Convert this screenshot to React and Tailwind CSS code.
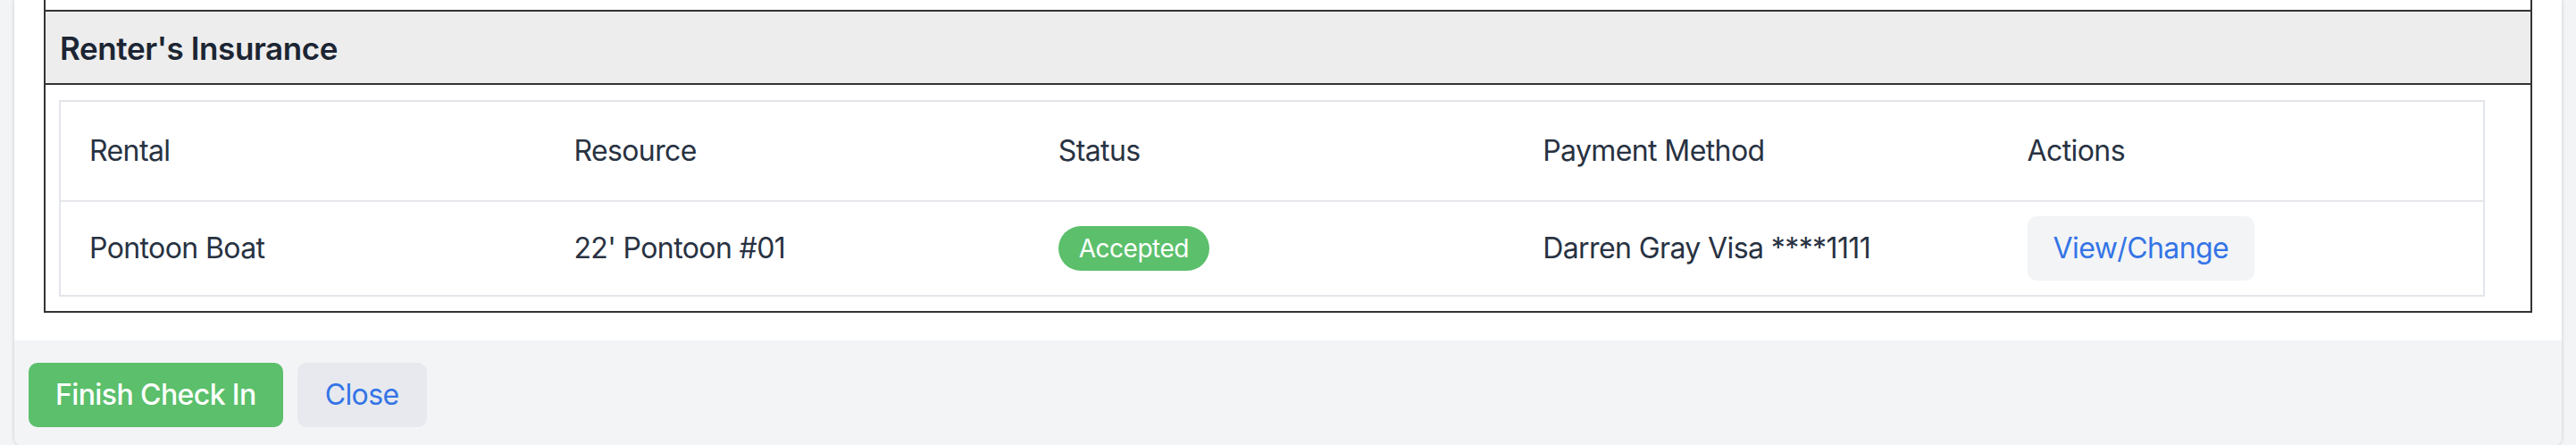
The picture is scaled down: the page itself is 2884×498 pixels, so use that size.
import React from 'react';

const columns = ['Rental', 'Resource', 'Status', 'Payment Method', 'Actions'];

const rows = [
  {
    rental: 'Pontoon Boat',
    resource: "22' Pontoon #01",
    status: 'Accepted',
    payment: 'Darren Gray Visa ****1111'
  }
];

function StatusBadge({ label }) {
  return (
    <span className="inline-flex items-center rounded-full bg-[#5cbf6b] px-[23px] py-[5px] text-[28px] leading-[40px] tracking-[-0.5px] text-white">
      {label}
    </span>
  );
}

export default function App() {
  return (
    <div className="h-[498px] overflow-hidden bg-[#f3f4f6] font-['Inter',sans-serif] tracking-[-0.6px]">
      <div className="mx-[16px] h-full rounded-b-[8px] bg-white shadow-[0_0_4px_rgba(0,0,0,0.18)] overflow-hidden flex flex-col">
        <div className="px-[33px] pb-[31px]">
          {/* tail of the previous section box */}
          <div className="h-[11px] border-x-2 border-[#333333]" />

          <div className="border-2 border-[#333333]">
            <div className="flex h-[82px] items-center border-b-2 border-[#333333] bg-[#ededed] px-[16px] pt-[2px]">
              <h2 className="text-[35px] font-semibold leading-[48px] tracking-[-0.4px] text-[#1c2533]">Renter's Insurance</h2>
            </div>

            <div className="pl-[15px] pr-[51px] pt-[17px] pb-[16px]">
              <div className="border-2 border-[#e2e5e9] text-[32px] leading-[48px] text-[#283242]">
                <div className="grid h-[112px] grid-cols-5 items-center border-b-2 border-[#e5e7eb]">
                  {columns.map((col) => (
                    <div key={col} className="px-[32px]">
                      {col}
                    </div>
                  ))}
                </div>
                {rows.map((row) => (
                  <div key={row.rental} className="grid h-[104px] grid-cols-5 items-center">
                    <div className="px-[32px]">{row.rental}</div>
                    <div className="px-[32px]">{row.resource}</div>
                    <div className="px-[32px]">
                      <StatusBadge label={row.status} />
                    </div>
                    <div className="px-[32px]">{row.payment}</div>
                    <div className="px-[32px]">
                      <button className="h-[72px] rounded-[10px] bg-[#f3f4f6] px-[29px] text-[32px] text-[#3474e6]">
                        View/Change
                      </button>
                    </div>
                  </div>
                ))}
              </div>
            </div>
          </div>
        </div>

        <div className="flex flex-1 items-start gap-[16px] bg-[#f3f4f6] px-[16px] pt-[25px]">
          <button className="h-[72px] rounded-[10px] bg-[#5bbf6b] px-[30px] text-[32px] font-medium text-white">
            Finish Check In
          </button>
          <button className="h-[72px] rounded-[10px] bg-[#e7e9ee] px-[31px] text-[32px] text-[#3474e6]">
            Close
          </button>
        </div>
      </div>
    </div>
  );
}
